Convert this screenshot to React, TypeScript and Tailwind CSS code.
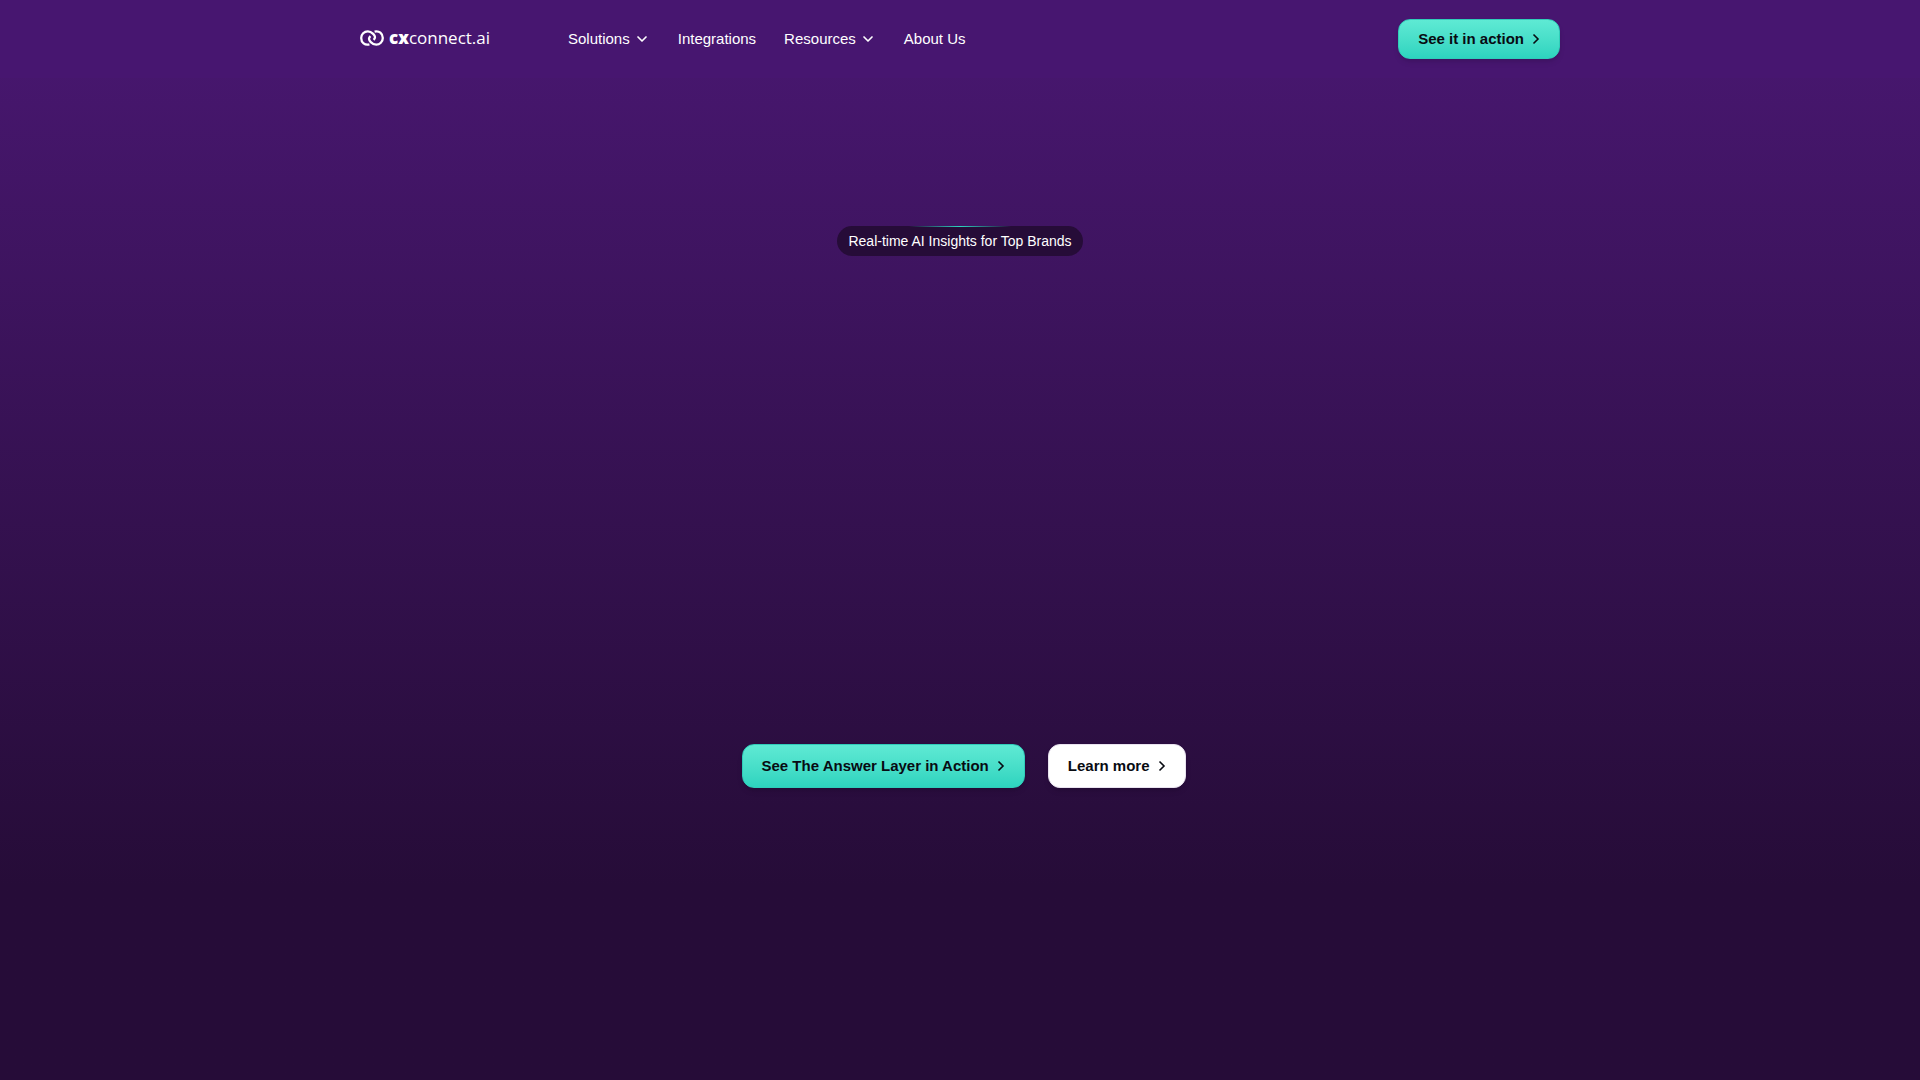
import React from 'react';
import { ChevronDown } from 'lucide-react';
import clsx from 'clsx';

interface NavItem {
  label: string;
  hasMenu?: boolean;
}

const navItems: NavItem[] = [
  { label: 'Solutions', hasMenu: true },
  { label: 'Integrations' },
  { label: 'Resources', hasMenu: true },
  { label: 'About Us' },
];

const Logo: React.FC = () => (
  <a href="#" aria-label="cxconnect.ai" className="flex w-[132px] items-center gap-[5px] pb-0.5 text-white">
    <svg width="24" height="16" viewBox="0 0 24 16" fill="none" stroke="currentColor" strokeWidth="2.3">
      <path d="M9.4 14.4C4.8 15.6 1.2 12.4 1.2 8C1.2 4.2 4.2 1.3 7.8 1.3C10 1.3 11.5 2.2 13.2 3.9C15.4 6.1 15.6 8 13.6 9.8" />
      <path d="M14.6 1.6C19.2 .4 22.8 3.6 22.8 8C22.8 11.8 19.8 14.7 16.2 14.7C14 14.7 12.5 13.8 10.8 12.1C8.6 9.9 8.4 8 10.4 6.2" />
    </svg>
    <span className="font-['Open_Sans','Noto_Sans',sans-serif] text-[17px] leading-5">
      <span className="font-extrabold">cx</span>connect.ai
    </span>
  </a>
);

interface ActionButtonProps {
  label: string;
  variant?: 'primary' | 'light';
  size?: 'md' | 'lg';
}

const ActionButton: React.FC<ActionButtonProps> = ({ label, variant = 'primary', size = 'md' }) => (
  <button
    className={clsx(
      'flex items-center gap-2 rounded-xl border px-[19px] text-[15px] font-bold shadow-md',
      size === 'lg' ? 'h-11' : 'h-10',
      variant === 'primary'
        ? 'border-[#2fcdb9] bg-linear-to-b from-[#5eead4] to-[#2dd4bf] text-[#080b12]'
        : 'border-[#e9e3ef] bg-white text-[#080b12]'
    )}
  >
    {label}
    <svg width="8" height="12" viewBox="0 0 8 12" fill="none" stroke="currentColor" strokeWidth="1.6">
      <path d="M1.5 1.5L6 6l-4.5 4.5" />
    </svg>
  </button>
);

const Header: React.FC = () => (
  <header className="bg-[#471670]">
    <div className="mx-auto flex h-[78px] max-w-[1200px] items-center">
      <Logo />
      <nav className="ml-[76px] flex items-center gap-7 text-[15px] text-white">
        {navItems.map((item) =>
          item.hasMenu ? (
            <button key={item.label} className="flex items-center gap-1">
              {item.label}
              <ChevronDown size={16} strokeWidth={2.5} />
            </button>
          ) : (
            <a key={item.label} href="#">
              {item.label}
            </a>
          )
        )}
      </nav>
      <div className="ml-auto">
        <ActionButton label="See it in action" />
      </div>
    </div>
  </header>
);

const Hero: React.FC = () => (
  <main className="flex flex-col items-center pt-[148px]">
    <div className="relative rounded-full bg-[#260c38] px-[11px] py-[5px] text-sm text-white">
      <span className="absolute inset-x-[72px] top-0 h-px bg-linear-to-r from-transparent via-[#2dd4bf] to-transparent" />
      Real-time AI Insights for Top Brands
    </div>
    <div className="mt-[488px] flex items-center gap-[23px] pl-[7px]">
      <ActionButton label="See The Answer Layer in Action" size="lg" />
      <ActionButton label="Learn more" variant="light" size="lg" />
    </div>
  </main>
);

const App: React.FC = () => (
  <div className="min-h-screen bg-linear-to-b from-[#481770] from-3% to-[#260c38] to-82% font-['Liberation_Sans',Arial,sans-serif]">
    <Header />
    <Hero />
  </div>
);

export default App;
